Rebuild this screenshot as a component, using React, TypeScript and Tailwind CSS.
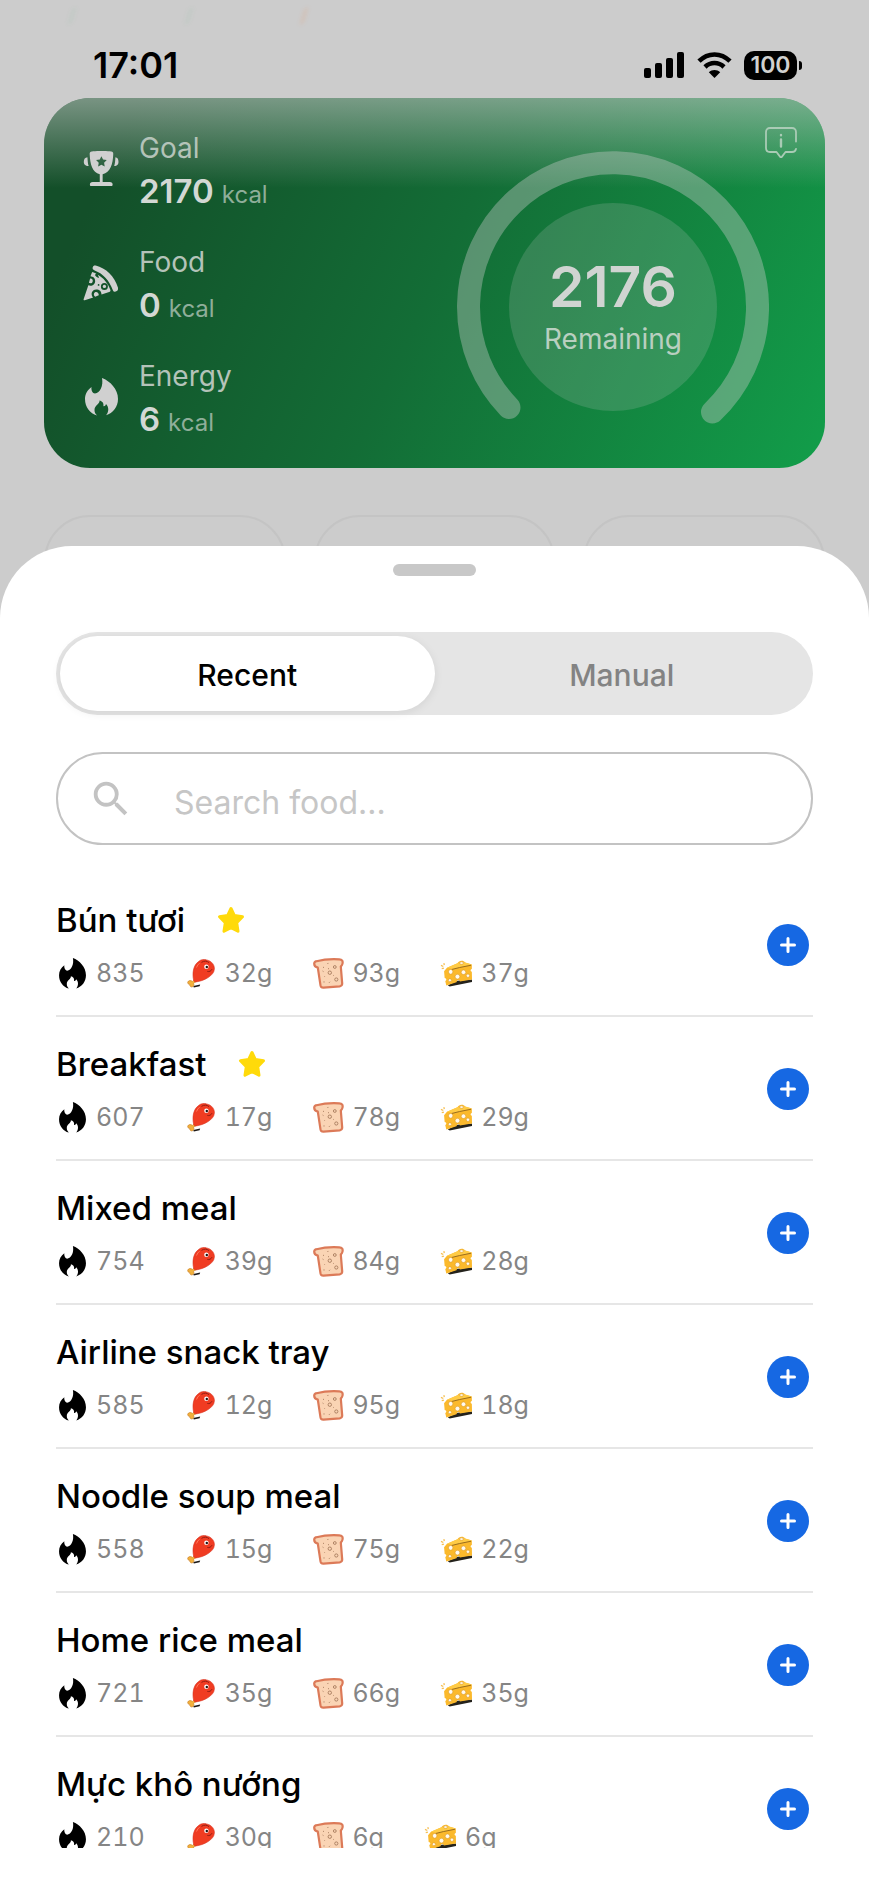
import { useState } from 'react';
import { MdSearch } from 'react-icons/md';
import { clsx } from 'clsx';

interface Meal {
  name: string;
  kcal: number;
  protein: number;
  carbs: number;
  fat: number;
  starred?: boolean;
}

const MEALS: Meal[] = [
  { name: 'Bún tươi', kcal: 835, protein: 32, carbs: 93, fat: 37, starred: true },
  { name: 'Breakfast', kcal: 607, protein: 17, carbs: 78, fat: 29, starred: true },
  { name: 'Mixed meal', kcal: 754, protein: 39, carbs: 84, fat: 28 },
  { name: 'Airline snack tray', kcal: 585, protein: 12, carbs: 95, fat: 18 },
  { name: 'Noodle soup meal', kcal: 558, protein: 15, carbs: 75, fat: 22 },
  { name: 'Home rice meal', kcal: 721, protein: 35, carbs: 66, fat: 35 },
  { name: 'Mực khô nướng', kcal: 210, protein: 30, carbs: 6, fat: 6 },
];

const TABS = ['Recent', 'Manual'];

function FlameIcon({ className }: { className?: string }) {
  return (
    <svg viewBox="0 0 33 38" fill="currentColor" className={className} aria-hidden="true">
      <path d="M17 0C25 3 33 11 33 21C33 29 28 35 21 37.3C24 34 24 29 21 26C20.5 28 19 28.6 18.4 28C19 25 17 23 14.5 22.5C15 26 9.5 27 9.5 32C9.5 34.5 10.5 36 12 37.5C5 35.5 0 29 0 21C0 16 2.5 12 6.5 9C6 12 7.5 15.5 10 15.5C15 15 18.5 8 17 0Z" />
    </svg>
  );
}

function TrophyIcon() {
  return (
    <svg viewBox="0 0 34 35" fill="currentColor" className="h-9 w-9" aria-hidden="true">
      <path
        fillRule="evenodd"
        d="M8 .5C13 -.2 22 -.2 27 .5C28.5 .8 29 1.5 28.9 3C28.6 13 26 21 18.6 22.6V30.2H25.5C27.5 30.2 28.3 31.3 28.3 32.5C28.3 33.6 27.8 34 27 34H7.5C6.6 34 6.2 33.6 6.2 32.5C6.2 31.3 7 30.2 9 30.2H15.8V22.6C8.5 21 6.4 13 6 3C5.9 1.5 6.5 .8 8 .5ZM17.4 5L15.8 8.3L12.2 8.8L14.8 11.4L14.2 15L17.4 13.3L20.6 15L20 11.4L22.6 8.8L19 8.3Z"
      />
      <path d="M3.8 6C4.1 10 4.2 12 5 14.6C1.5 14.6 .3 13 .3 10.5C.3 7.8 1.5 6.2 3.8 6ZM31 6C30.8 10 30.6 12 29.8 14.6C33 14.6 34 13 34 10.5C34 7.8 33 6.2 31 6Z" />
    </svg>
  );
}

function PizzaIcon() {
  return (
    <svg viewBox="0 0 36 37" fill="currentColor" className="h-9 w-9" aria-hidden="true">
      <path d="M12.5 .6C23 3 32 12 35.4 23C36 25.5 35 26.5 33 27.3C31.2 27.9 30.6 27.2 30 25.5C26.5 16 20.5 9 11.5 5.6C9.8 4.9 9 4 9.5 2.4C10 .8 11 .2 12.5 .6Z" />
      <path
        fillRule="evenodd"
        d="M8.9 7.2C10.5 7.5 12 8.2 13.2 9C11.6 9.6 11.6 10.6 12.7 11.6C13.8 12.8 15 13.4 16 12.8L14.6 10C20.5 13.2 25 18.6 27.7 25.6C27.9 26.6 27.4 27.3 26.4 27.7L18.5 30.4C18.6 27 16.2 25 13 25.1C9.5 25.3 7.8 28 8.6 31.3C9 32.5 9.5 33 10 33.4L1.3 36.3C.3 36.5 -.1 35.8 .2 35L5 20.8C8.4 22.3 12 20 12 16.4C12 13.6 10 11.7 7.2 11.6ZM21.5 18.5A3.6 3.6 0 1 0 21.5 25.7A3.6 3.6 0 1 0 21.5 18.5Z"
      />
      <circle cx="21.5" cy="22" r="1.7" />
      <path d="M11.5 28.2C13.4 27 16 28.5 15.7 31.2L12 32.6C10.4 31.6 10.2 29.2 11.5 28.2ZM6.8 14C9 13.8 10 15.5 9.4 17.2C8.8 18.8 7.2 19.2 5.6 18.3Z" />
      <circle cx="15.5" cy="20.5" r=".9" fill="#14532d" />
    </svg>
  );
}

function InfoBubbleIcon() {
  return (
    <svg viewBox="0 0 32 32" fill="none" stroke="currentColor" strokeWidth="1.8" strokeLinecap="round" strokeLinejoin="round" className="size-8">
      <path d="M31 14.5V5C31 2.5 29.5 1 27 1H5C2.5 1 1 2.5 1 5V21C1 23.5 2.5 25 5 25H11.5L15 29.6C15.6 30.4 16.4 30.4 17 29.6L20.5 25H27C29.2 25 30.6 24 31 21.8" />
      <path d="M16 12.5V19.5M16 8V8.2" strokeWidth="2.4" />
    </svg>
  );
}

function DrumstickIcon() {
  return (
    <svg viewBox="0 0 28 29" className="h-[29px] w-7" aria-hidden="true">
      <path d="M6.2 27L13.2 25.6L12.6 27.2L6.8 28.6Z" fill="#1c1917" />
      <path d="M8 20L5.4 22.4C4 21 1.2 21.4 .8 23C.4 24.4 1.2 25.4 2.6 25.2C2.6 27.6 4.4 28.6 5.9 27.6C7.4 26.6 7 25.2 6.4 24.4L9.8 22.2Z" fill="#f2b13c" stroke="#c77a25" strokeWidth=".6" />
      <path d="M6.6 21C5.2 15 6 6.5 11.5 2.6C13.5 .6 17 -.2 19.5 .9C24.5 1.8 28 6 27.3 10.5C27 16.5 17 22 9.2 22.9C7.6 23 6.9 22.3 6.6 21Z" fill="#f03c22" stroke="#d93220" strokeWidth=".6" />
      <path d="M14.5 3.4C17 1.6 20 1.8 22 3.6M20.3 12.4C22.2 13 24.2 12 25 10.2" fill="none" stroke="#8f1d13" strokeWidth="1" />
      <path d="M9.5 8.5C10.2 6.6 11.2 5.2 12.6 4.2" fill="none" stroke="#ff765a" strokeWidth="1" />
      <circle cx="19.4" cy="7.8" r="2.2" fill="#fff" />
      <circle cx="19.8" cy="8" r="1.2" fill="#201313" />
    </svg>
  );
}

function BreadIcon() {
  return (
    <svg viewBox="0 0 31 31" className="size-[31px]" aria-hidden="true">
      <path
        d="M3.5 3.2C10 1.5 19 .9 26.2 1.3C29.3 1.5 30 3.4 29.5 5.6C29.2 7.2 28.3 8 27.8 8.5L29.2 25.3C29.3 27 28.4 28 26.7 28.3L10.5 29.7C8.8 29.8 7.8 29 7.5 27.4L4.8 9.6C2.8 9.1 1.2 7.7 1.2 5.7C1.3 4.3 2 3.5 3.5 3.2Z"
        fill="#fad4b4"
        stroke="#dc7a58"
        strokeWidth="2.2"
        strokeLinejoin="round"
      />
      <g fill="none" stroke="#a67b5c" strokeWidth=".9">
        <circle cx="21.8" cy="9" r="1.4" />
        <circle cx="16.8" cy="14.7" r="1.7" />
        <circle cx="23.3" cy="21.5" r="1.6" />
        <path d="M10 9.5L11 9.2M9.6 13L10.5 13.6M15 10.4L16 11M11 24.5V23.4M16 24.8L17 23.8M20 17L20.7 17.6M14.4 5.5L15.4 5.4M11.5 18.4L12 19" />
      </g>
    </svg>
  );
}

function CheeseIcon() {
  return (
    <svg viewBox="0 0 34 28" className="h-7 w-[33px]" aria-hidden="true">
      <path d="M8 26.5L18 22L33 20.6V23.4L10 27.8Z" fill="#24221c" />
      <path d="M4.2 12.3L7.2 8.6L18 4C19.2 .8 24.5 .6 25.8 3.2L32.8 5.2V9.8C31.2 10 31 12.4 32.8 12.7L33 20.8L20.5 22.7C19.8 20.7 17.5 20.8 17 23.5L6.5 26.9L5.4 22.2C7 21.8 7 19.4 4.8 19.2Z" fill="#fbb92c" />
      <path d="M7.2 8.6L18 4L25.8 3.2L32.8 5.2L14 9.9Z" fill="#ffcb45" />
      <path d="M12 10.4L20 8.4L32 6" fill="none" stroke="#8a611c" strokeWidth=".9" />
      <g fill="#fffaf0" stroke="#dd9a25" strokeWidth=".6">
        <ellipse cx="22.2" cy="3.8" rx="2" ry="1.3" />
        <ellipse cx="11" cy="12.8" rx="2.3" ry="2.5" />
        <circle cx="18" cy="17.8" r="2.5" />
        <circle cx="24.2" cy="13.2" r="2.4" />
        <circle cx="28.8" cy="16.8" r="1.8" />
        <circle cx="10.2" cy="21.4" r="1.6" />
      </g>
      <path d="M1 6.2L3.4 7.3M4 3.8L4.4 6M1.8 9.6L4 9" stroke="#f5bf52" strokeWidth="1.3" />
    </svg>
  );
}

function StarIcon() {
  return (
    <svg viewBox="0 0 28 28" className="size-7" role="img" aria-label="Favourite">
      <path
        d="M14 2.5L17.4 9.6L25.5 10.8L19.7 16.6L21 25.2L14 21.6L7 25.2L8.3 16.6L2.5 10.8L10.6 9.6Z"
        fill="#ffda0a"
        stroke="#ffda0a"
        strokeWidth="3"
        strokeLinejoin="round"
      />
    </svg>
  );
}

function StatusBar() {
  return (
    <header className="relative flex h-[98px] shrink-0 items-center justify-between pt-8 pr-[67px] pl-[93px]">
      <span aria-hidden="true" className="absolute top-2 left-[70px] h-4 w-1 skew-x-[-16deg] bg-green-600/5 blur-[2px]" />
      <span aria-hidden="true" className="absolute top-2 left-[187px] h-4 w-1 skew-x-[-16deg] bg-green-600/5 blur-[2px]" />
      <span aria-hidden="true" className="absolute top-2 left-[302px] h-4 w-1 skew-x-[-16deg] bg-orange-500/10 blur-[2px]" />
      <span className="text-[36px] leading-10 font-semibold">17:01</span>
      <div className="flex items-center">
        <svg viewBox="0 0 41 27" fill="currentColor" className="mr-3 h-[27px] w-[41px]" aria-label="Signal">
          <rect x="0" y="16" width="7" height="10" rx="2" />
          <rect x="11" y="11" width="7" height="15" rx="2" />
          <rect x="22" y="6" width="7" height="20" rx="2" />
          <rect x="33" y="0" width="7" height="26" rx="2" />
        </svg>
        <svg viewBox="0 0 35 26" className="mr-3 h-[26px] w-[35px]" aria-label="Wi-Fi">
          <path d="M2 9.2C11 .2 24 .2 33 9.2M8 15C13.5 9.7 21.5 9.7 27 15" fill="none" stroke="currentColor" strokeWidth="4.6" />
          <path d="M17.5 26L11.8 20.2C15 17.2 20 17.2 23.2 20.2Z" fill="currentColor" />
        </svg>
        <span className="flex h-[29px] w-[53px] items-center justify-center rounded-[10px] bg-black text-[23px] font-semibold text-[#d0d0d0]">100</span>
        <span className="ml-[2px] h-[9px] w-[3px] rounded-r-full bg-black" />
      </div>
    </header>
  );
}

function Stat({ icon, label, value }: { icon: React.ReactNode; label: string; value: number }) {
  return (
    <div className="flex items-center gap-5">
      <span className="flex w-9 justify-center text-[#d0d0d0]">{icon}</span>
      <div>
        <p className="text-[28px] leading-[44px] text-[#b4c3b9]">{label}</p>
        <p className="text-[33px] leading-[42px] font-semibold text-[#d3d8d4]">
          {value}
          <span className="ml-2 text-[24px] leading-none font-normal text-[#8fae9a]">kcal</span>
        </p>
      </div>
    </div>
  );
}

function CalorieCard() {
  return (
    <section className="relative mx-11 flex shrink-0 justify-between overflow-hidden rounded-[46px] bg-linear-[115deg] from-[#134f29] from-10% via-[#136d36] via-50% to-[#129e4a] pr-14 pl-[39px]">
      <div className="absolute inset-x-0 top-0 h-[90px] bg-linear-to-b from-[#cccccc]/55 to-[#cccccc]/0" />
      <div className="relative flex flex-col gap-7 pt-7 pb-7">
        <Stat icon={<TrophyIcon />} label="Goal" value={2170} />
        <Stat icon={<PizzaIcon />} label="Food" value={0} />
        <Stat icon={<FlameIcon className="h-[38px] w-[33px]" />} label="Energy" value={6} />
      </div>
      <div className="relative mt-[53px] flex size-[312px] flex-col items-center justify-center pt-1">
        <svg viewBox="0 0 312 312" fill="none" className="absolute inset-0 size-full" aria-hidden="true">
          <circle cx="156" cy="156" r="104" fill="#ccc" fillOpacity=".19" />
          <path d="M52 256.5A144.5 144.5 0 1 1 255.5 261" stroke="#ccc" strokeOpacity=".38" strokeWidth="23" strokeLinecap="round" />
        </svg>
        <p className="relative text-[57px] leading-[60px] font-semibold text-[#d0d4d1]">2176</p>
        <p className="relative text-[28px] leading-[44px] text-[#b9cfc0]">Remaining</p>
      </div>
      <button type="button" aria-label="About this card" className="absolute top-[29px] right-7 text-[#a9cbb5]">
        <InfoBubbleIcon />
      </button>
    </section>
  );
}

function Macro({ icon, value }: { icon: React.ReactNode; value: string }) {
  return (
    <span className="flex items-center gap-2">
      <span className="flex min-w-8 justify-center">{icon}</span>
      {value}
    </span>
  );
}

function MealRow({ meal }: { meal: Meal }) {
  return (
    <li className="flex items-center justify-between border-b-2 border-[#e6e6e6] pt-[27px] pr-1 pb-[26px]">
      <div>
        <div className="flex items-center gap-8">
          <h2 className="text-[33px] leading-10 font-medium text-black">{meal.name}</h2>
          {meal.starred && <StarIcon />}
        </div>
        <div className="mt-[17px] flex h-8 items-center gap-10 text-[25px] leading-8 text-[#858585] tabular-nums">
          <Macro icon={<FlameIcon className="h-[31px] w-[29px] text-black" />} value={String(meal.kcal)} />
          <Macro icon={<DrumstickIcon />} value={`${meal.protein}g`} />
          <Macro icon={<BreadIcon />} value={`${meal.carbs}g`} />
          <Macro icon={<CheeseIcon />} value={`${meal.fat}g`} />
        </div>
      </div>
      <button
        type="button"
        aria-label={`Add ${meal.name}`}
        className="flex size-[42px] items-center justify-center rounded-full bg-[#1668e3] text-white"
      >
        <svg viewBox="0 0 16 16" stroke="currentColor" strokeWidth="3" strokeLinecap="round" className="size-4" aria-hidden="true">
          <path d="M8 1.5V14.5M1.5 8H14.5" />
        </svg>
      </button>
    </li>
  );
}

export default function App() {
  const [tab, setTab] = useState('Recent');
  const [query, setQuery] = useState('');

  const meals = MEALS.filter((m) => m.name.toLowerCase().includes(query.toLowerCase()));

  return (
    <div className="flex h-screen flex-col overflow-hidden bg-[#cccccc] font-['Inter','Liberation_Sans',sans-serif] text-black">
      <StatusBar />
      <CalorieCard />

      <div className="mx-11 mt-[47px] grid shrink-0 grid-cols-3 gap-7">
        {[0, 1, 2].map((i) => (
          <div key={i} className="h-[120px] rounded-[46px] border-2 border-[#c4c4c4]" />
        ))}
      </div>

      <main className="relative -mt-[89px] flex min-h-0 flex-1 flex-col rounded-t-[72px] bg-white px-14 pb-[37px]">
        <div className="mx-auto mt-[18px] h-3 w-[83px] shrink-0 rounded-full bg-[#c8c8c8]" />

        <div role="tablist" className="mt-14 grid h-[83px] shrink-0 grid-cols-2 rounded-full bg-[#e5e5e5] p-1">
          {TABS.map((name) => (
            <button
              key={name}
              type="button"
              role="tab"
              aria-selected={tab === name}
              onClick={() => setTab(name)}
              className={clsx(
                'rounded-full pt-1 text-[30px] font-medium',
                tab === name ? 'bg-white text-black shadow-[0_2px_10px_rgba(0,0,0,0.08)]' : 'text-[#838383]',
              )}
            >
              {name}
            </button>
          ))}
        </div>

        <label className="mt-[37px] flex h-[93px] shrink-0 items-center rounded-full border-2 border-[#c3c3c3] pr-8 pl-[30px]">
          <MdSearch size={46} className="shrink-0 text-[#c3c3c3]" />
          <input
            type="text"
            aria-label="Search food"
            placeholder="Search food..."
            value={query}
            onChange={(e) => setQuery(e.target.value)}
            className="ml-10 min-w-0 flex-1 pt-2 text-[32px] outline-none placeholder:text-[#c6c6c6]"
          />
        </label>

        <ul className="mt-7 min-h-0 flex-1 overflow-hidden">
          {meals.map((meal) => (
            <MealRow key={meal.name} meal={meal} />
          ))}
        </ul>
      </main>
    </div>
  );
}
